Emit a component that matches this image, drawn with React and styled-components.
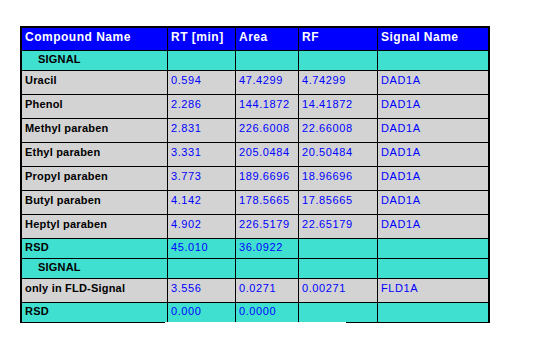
import React from 'react';
import styled, { createGlobalStyle } from 'styled-components';

const GlobalStyle = createGlobalStyle`
  html, body {
    margin: 0;
    padding: 0;
    background: #ffffff;
  }
  * {
    box-sizing: border-box;
  }
`;

const COLUMNS = '146px 68px 63px 79px 110px';

const Page = styled.div`
  width: 555px;
  height: 356px;
  padding: 26px 0 0 20px;
  font-family: "Liberation Sans", Arial, sans-serif;
`;

const Table = styled.div`
  width: 470px;
  display: flex;
  flex-direction: column;
  border: 2px solid #000000;
  border-bottom: none;
`;

const bgFor = {
  header: '#0000ff',
  section: '#40e0d0',
  data: '#d3d3d3',
  rsd: '#40e0d0',
};

const Row = styled.div`
  display: grid;
  grid-template-columns: ${COLUMNS};
  height: ${(p) => p.$height}px;
  background: ${(p) => bgFor[p.$kind]};
  border-bottom: ${(p) => (p.$last ? 'none' : '1px solid #000000')};
`;

const Cell = styled.div`
  padding: ${(p) => p.$top}px 0 0 ${(p) => (p.$indent ? 16 : 3)}px;
  border-right: 1px solid #000000;
  font-size: ${(p) => (p.$head ? 12 : 11)}px;
  line-height: ${(p) => (p.$head ? 14 : 13)}px;
  white-space: nowrap;
  overflow: hidden;

  &:last-child {
    border-right: none;
  }
`;

const HeadText = styled.span`
  font-weight: bold;
  letter-spacing: 0.5px;
  color: #ffffff;
`;

const NameText = styled.span`
  font-weight: bold;
  letter-spacing: 0.2px;
  color: #000000;
`;

const ValueText = styled.span`
  letter-spacing: 0.6px;
  color: #0000ff;
`;

const BottomRule = styled.div`
  width: 470px;
  height: 1px;
  display: flex;
`;

const RuleSegment = styled.div`
  width: ${(p) => p.$width}px;
  flex: ${(p) => (p.$grow ? 1 : 'none')};
  background: ${(p) => (p.$gap ? 'transparent' : '#000000')};
`;

const headers = ['Compound Name', 'RT [min]', 'Area', 'RF', 'Signal Name'];

const rows = [
  { kind: 'section', name: 'SIGNAL' },
  { kind: 'data', name: 'Uracil', rt: '0.594', area: '47.4299', rf: '4.74299', sig: 'DAD1A' },
  { kind: 'data', name: 'Phenol', rt: '2.286', area: '144.1872', rf: '14.41872', sig: 'DAD1A' },
  { kind: 'data', name: 'Methyl paraben', rt: '2.831', area: '226.6008', rf: '22.66008', sig: 'DAD1A' },
  { kind: 'data', name: 'Ethyl paraben', rt: '3.331', area: '205.0484', rf: '20.50484', sig: 'DAD1A' },
  { kind: 'data', name: 'Propyl paraben', rt: '3.773', area: '189.6696', rf: '18.96696', sig: 'DAD1A' },
  { kind: 'data', name: 'Butyl paraben', rt: '4.142', area: '178.5665', rf: '17.85665', sig: 'DAD1A' },
  { kind: 'data', name: 'Heptyl paraben', rt: '4.902', area: '226.5179', rf: '22.65179', sig: 'DAD1A' },
  { kind: 'rsd', name: 'RSD', rt: '45.010', area: '36.0922' },
  { kind: 'section', name: 'SIGNAL' },
  { kind: 'data', name: 'only in FLD-Signal', rt: '3.556', area: '0.0271', rf: '0.00271', sig: 'FLD1A' },
  { kind: 'rsd', name: 'RSD', rt: '0.000', area: '0.0000', last: true },
];

const heights = { section: 20, data: 24, rsd: 20 };

function ResultRow({ row }) {
  const top = row.kind === 'data' ? 3 : 2;
  const values = [row.rt, row.area, row.rf, row.sig];
  return (
    <Row $kind={row.kind} $height={row.last ? 19 : heights[row.kind]} $last={row.last}>
      <Cell $top={top} $indent={row.kind === 'section'}>
        <NameText>{row.name}</NameText>
      </Cell>
      {values.map((v, i) => (
        <Cell key={i} $top={top}>
          {v && <ValueText>{v}</ValueText>}
        </Cell>
      ))}
    </Row>
  );
}

export default function App() {
  return (
    <Page>
      <GlobalStyle />
      <Table>
        <Row $kind="header" $height={23}>
          {headers.map((h) => (
            <Cell key={h} $top={2} $head>
              <HeadText>{h}</HeadText>
            </Cell>
          ))}
        </Row>
        {rows.map((row, i) => (
          <ResultRow key={i} row={row} />
        ))}
      </Table>
      <BottomRule>
        <RuleSegment $width={145} />
        <RuleSegment $width={181} $gap />
        <RuleSegment $grow />
      </BottomRule>
    </Page>
  );
}
